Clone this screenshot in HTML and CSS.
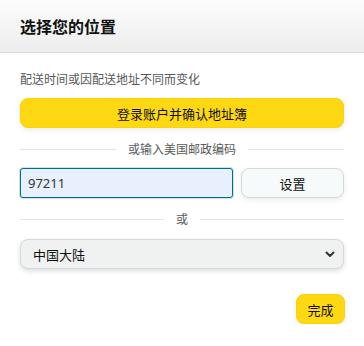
FILE: index.html
```html
<!DOCTYPE html>
<html lang="zh">
<head>
    <meta charset="UTF-8">
    <title>选择您的位置</title>
    <link rel="stylesheet" href="styles.css">
</head>
<body>
    <div class="popover">
        <!-- Header -->
        <div class="popover-header">选择您的位置</div>

        <div class="popover-body">
            <p class="hint">配送时间或因配送地址不同而变化</p>
            <button class="btn-primary btn-wide">登录账户并确认地址簿</button>

            <div class="divider"><span>或输入美国邮政编码</span></div>

            <div class="zip-row">
                <input class="zip-input" type="text" value="97211">
                <button class="btn-secondary">设置</button>
            </div>

            <div class="divider"><span>或</span></div>

            <div class="select">
                <span>中国大陆</span>
                <svg width="10" height="7" viewBox="0 0 10 7"><path d="M1.5 1.5 L5 5 L8.5 1.5" fill="none" stroke="#333" stroke-width="2" stroke-linecap="round" stroke-linejoin="round"/></svg>
            </div>

            <div class="footer">
                <button class="btn-primary btn-done">完成</button>
            </div>
        </div>
    </div>
</body>
</html>
```

FILE: styles.css
```css
* {
    margin: 0;
    padding: 0;
    box-sizing: border-box;
}

body {
    font-family: "Noto Sans", "Noto Sans CJK SC", sans-serif;
    background: #fff;
    color: #0f1111;
    width: 364px;
}

.popover-header {
    height: 53px;
    padding: 0 20px;
    display: flex;
    align-items: center;
    font-size: 16px;
    font-weight: 700;
    background: linear-gradient(#fcfcfc, #ededed);
    border-bottom: 1px solid #dcdcdc;
}

.popover-body {
    padding: 17px 20px 0;
}

.hint {
    font-size: 12px;
    color: #565959;
    line-height: 20px;
}

button {
    font-family: inherit;
    color: #0f1111;
    cursor: pointer;
}

.btn-primary {
    background: #ffd814;
    border: 1px solid #fcd200;
    border-radius: 8px;
    box-shadow: 0 2px 5px rgba(213, 217, 217, 0.5);
    font-size: 13px;
}

.btn-wide {
    display: block;
    width: 100%;
    height: 30px;
    margin-top: 8px;
}

.divider {
    display: flex;
    align-items: center;
    gap: 12px;
    font-size: 12px;
    color: #565959;
    height: 20px;
    margin-top: 11px;
}

.divider::before,
.divider::after {
    content: "";
    flex: 1;
    height: 1px;
    background: #e3e6e6;
}

.zip-row {
    display: flex;
    gap: 8px;
    margin-top: 9px;
}

.zip-input {
    width: 213px;
    height: 30px;
    border: 1px solid #007185;
    border-radius: 3px;
    background: #e8f0fe;
    padding: 0 7px;
    font-family: inherit;
    font-size: 13px;
    color: #333;
    box-shadow: 0 0 0 1px rgba(0, 113, 133, 0.2);
    outline: none;
}

.btn-secondary {
    flex: 1;
    height: 30px;
    background: #f7fafa;
    border: 1px solid #d5d9d9;
    border-radius: 8px;
    font-size: 13px;
    box-shadow: 0 2px 5px rgba(213, 217, 217, 0.5);
}

.divider + .select {
    margin-top: 10px;
}

.select {
    height: 30px;
    display: flex;
    align-items: center;
    justify-content: space-between;
    padding: 0 8px 0 12px;
    background: #f0f2f2;
    border: 1px solid #d5d9d9;
    border-radius: 8px;
    box-shadow: 0 2px 5px rgba(15, 17, 17, 0.15);
    font-size: 13px;
}

.footer {
    display: flex;
    justify-content: flex-end;
    margin-top: 25px;
}

.btn-done {
    width: 49px;
    height: 30px;
    margin-right: -1px;
}
```
